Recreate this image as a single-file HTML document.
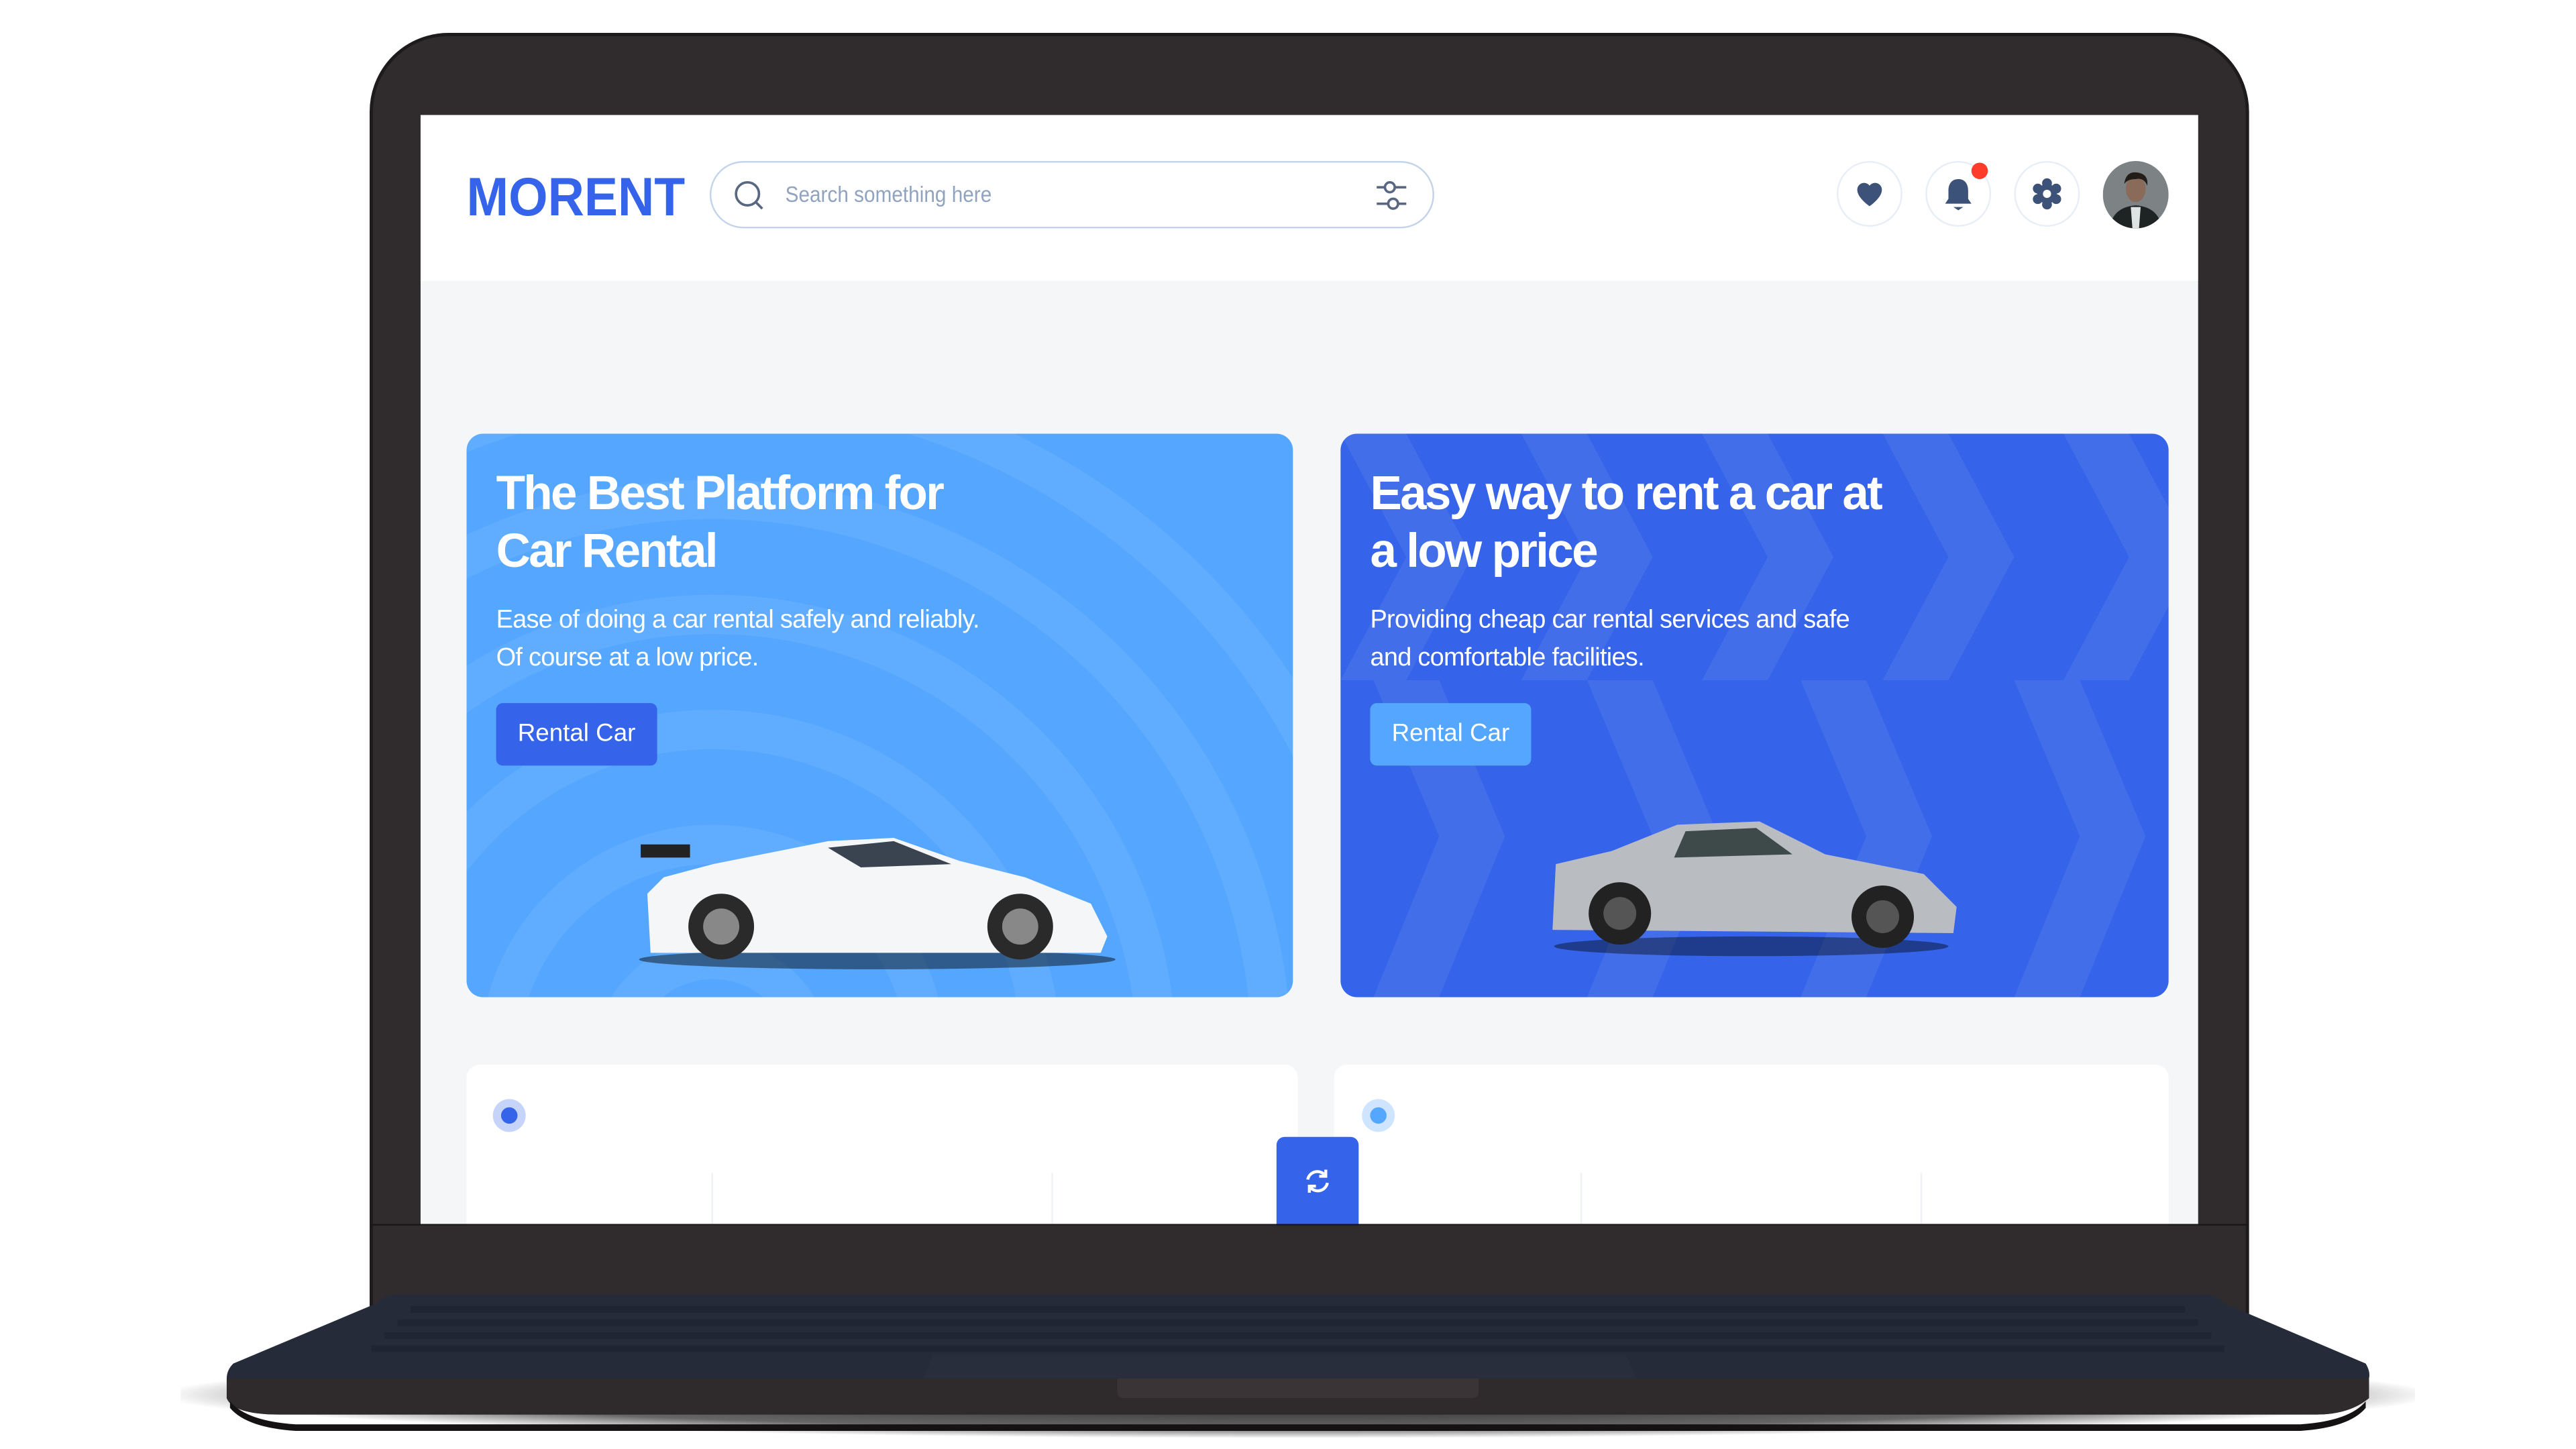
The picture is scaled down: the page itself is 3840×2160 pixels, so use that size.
<!DOCTYPE html>
<html><head><meta charset="utf-8"><style>
*{margin:0;padding:0;box-sizing:border-box}
html,body{width:3840px;height:2160px;background:#fff;overflow:hidden}
#w{position:absolute;left:0;top:0;width:1568px;height:882px;transform:scale(2.44898);transform-origin:0 0;font-family:"Liberation Sans",sans-serif;overflow:hidden}
.a{position:absolute}
</style></head><body><div id="w">
<div class="a" style="left:110px;top:835px;width:1360px;height:40px;background:radial-gradient(ellipse at 50% 35%,rgba(0,0,0,.9) 0%,rgba(0,0,0,.6) 55%,rgba(0,0,0,0) 72%)"></div>
<div class="a" style="left:225px;top:20px;width:1144px;height:790px;background:#302c2d;border-radius:48px 48px 10px 10px;border:2px solid #1e1b1c"></div>
<div class="a" style="left:256px;top:70px;width:1082px;height:676px;background:#f5f6f8;overflow:hidden">
  <div class="a" style="left:0;top:0;width:100%;height:101px;background:#fff"></div>
  <div class="a" style="left:28px;top:31px;font-size:33px;font-weight:bold;color:#3563e9;transform:scaleX(.93);transform-origin:0 0">MORENT</div>
  <div class="a" style="left:176px;top:28px;width:441px;height:41px;border:1.5px solid #c3d4e9;border-radius:21px;background:#fff"></div>
  <svg class="a" style="left:190px;top:39px" width="20" height="20" viewBox="0 0 20 20"><circle cx="9" cy="9" r="7" fill="none" stroke="#596780" stroke-width="1.5"/><path d="M14 14l4 4" stroke="#596780" stroke-width="1.5"/></svg>
  <div class="a" style="left:222px;top:41px;font-size:13.5px;color:#90a3bf;transform:scaleX(.9);transform-origin:0 0">Search something here</div>
  <svg class="a" style="left:580px;top:38px" width="22" height="22" viewBox="0 0 22 22" fill="none" stroke="#596780" stroke-width="1.5"><path d="M2 6h5M13 6h7M2 16h7M15 16h5"/><circle cx="10" cy="6" r="3"/><circle cx="12" cy="16" r="3"/></svg>
  <div class="a" style="left:862px;top:28px;width:40px;height:40px;border:1px solid #e8eef7;border-radius:50%"></div>
  <svg class="a" style="left:872px;top:38px" width="20" height="20" viewBox="0 0 24 24"><path d="M12 21s-9-6-9-12a5 5 0 0 1 9-3 5 5 0 0 1 9 3c0 6-9 12-9 12z" fill="#3d5278"/></svg>
  <div class="a" style="left:916px;top:28px;width:40px;height:40px;border:1px solid #e8eef7;border-radius:50%"></div>
  <svg class="a" style="left:926px;top:37px" width="20" height="22" viewBox="0 0 20 22"><path d="M10 2c-4 0-6 3-6 7v5l-2 3h16l-2-3V9c0-4-2-7-6-7z" fill="#3d5278"/><path d="M7 19h6l-3 2z" fill="#3d5278"/></svg>
  <div class="a" style="left:944px;top:29px;width:10px;height:10px;border-radius:50%;background:#ff3b2a"></div>
  <div class="a" style="left:970px;top:28px;width:40px;height:40px;border:1px solid #e8eef7;border-radius:50%"></div>
  <svg class="a" style="left:980px;top:38px" width="20" height="20" viewBox="0 0 20 20"><g fill="#3d5278"><circle cx="10" cy="10" r="6"/><circle cx="10" cy="3.5" r="3"/><circle cx="10" cy="16.5" r="3"/><circle cx="4.4" cy="6.8" r="3"/><circle cx="15.6" cy="6.8" r="3"/><circle cx="4.4" cy="13.2" r="3"/><circle cx="15.6" cy="13.2" r="3"/></g><circle cx="10" cy="10" r="2.5" fill="#fff"/></svg>
  <svg class="a" style="left:1024px;top:28px" width="40" height="41" viewBox="0 0 40 41"><defs><clipPath id="c"><ellipse cx="20" cy="20.5" rx="20" ry="20.5"/></clipPath></defs><g clip-path="url(#c)"><rect width="40" height="41" fill="#7d8285"/><path d="M4 41 Q6 28 20 27 Q34 28 36 41Z" fill="#1e2424"/><path d="M17 28h6l-1 13h-4z" fill="#dfe2e2"/><ellipse cx="20" cy="17" rx="6" ry="8" fill="#8a6a58"/><path d="M13 14 Q14 6 21 7 Q28 8 27 15 Q25 10 20 11 Q15 11 13 14Z" fill="#241c18"/></g></svg>
  <div class="a" style="left:28px;top:194px;width:503px;height:343px;border-radius:10px;background:#54a6ff;overflow:hidden">
    <svg class="a" style="left:0;top:0" width="503" height="343"><g fill="none" stroke="rgba(255,255,255,.07)" stroke-width="24"><circle cx="150" cy="380" r="60"/><circle cx="150" cy="380" r="130"/><circle cx="150" cy="380" r="200"/><circle cx="150" cy="380" r="270"/><circle cx="150" cy="380" r="340"/><circle cx="150" cy="380" r="410"/></g></svg>
    <div class="a" style="left:18px;top:20px;font-size:29px;font-weight:bold;color:#fff;line-height:35px;letter-spacing:-1.1px">The Best Platform for<br>Car Rental</div>
    <div class="a" style="left:18px;top:102px;font-size:15.5px;color:#fff;line-height:23px;letter-spacing:-0.3px">Ease of doing a car rental safely and reliably.<br>Of course at a low price.</div>
    <div class="a" style="left:18px;top:164px;width:98px;height:38px;background:#3563e9;border-radius:4px;color:#fff;font-size:15px;line-height:38px;text-align:center">Rental Car</div>
    <svg class="a" style="left:100px;top:240px" width="300" height="90" viewBox="0 0 300 90"><ellipse cx="150" cy="80" rx="145" ry="6" fill="rgba(0,0,0,.45)"/><path d="M12 76 L10 40 L20 30 L50 22 L120 8 L160 6 L200 20 L240 30 L280 46 L290 66 L286 76 Z" fill="#f4f6f8"/><path d="M6 10h30v8H6z" fill="#222"/><path d="M120 12 L160 8 L195 22 L140 24Z" fill="#3a4350"/><circle cx="55" cy="60" r="20" fill="#2a2a2a"/><circle cx="55" cy="60" r="11" fill="#888"/><circle cx="237" cy="60" r="20" fill="#2a2a2a"/><circle cx="237" cy="60" r="11" fill="#888"/></svg>
  </div>
  <div class="a" style="left:560px;top:194px;width:504px;height:343px;border-radius:10px;background:#3563e9;overflow:hidden">
    <svg class="a" style="left:0;top:0" width="504" height="343"><g fill="rgba(255,255,255,.07)"><path d="M0 0h40l40 75-40 75H0l40-75z"/><path d="M110 0h40l40 75-40 75h-40l40-75z"/><path d="M220 0h40l40 75-40 75h-40l40-75z"/><path d="M330 0h40l40 75-40 75h-40l40-75z"/><path d="M440 0h40l40 75-40 75h-40l40-75z"/><path d="M20 150h40l40 95-40 98H20l40-98z"/><path d="M150 150h40l40 95-40 98h-40l40-98z"/><path d="M280 150h40l40 95-40 98h-40l40-98z"/><path d="M410 150h40l40 95-40 98h-40l40-98z"/></g></svg>
    <div class="a" style="left:18px;top:20px;font-size:29px;font-weight:bold;color:#fff;line-height:35px;letter-spacing:-1.1px">Easy way to rent a car at<br>a low price</div>
    <div class="a" style="left:18px;top:102px;font-size:15.5px;color:#fff;line-height:23px;letter-spacing:-0.3px">Providing cheap car rental services and safe<br>and comfortable facilities.</div>
    <div class="a" style="left:18px;top:164px;width:98px;height:38px;background:#54a6ff;border-radius:4px;color:#fff;font-size:15px;line-height:38px;text-align:center">Rental Car</div>
    <svg class="a" style="left:125px;top:232px" width="255" height="90" viewBox="0 0 255 90"><ellipse cx="125" cy="80" rx="120" ry="6" fill="rgba(0,0,0,.4)"/><path d="M4 70 L6 30 L40 22 L80 6 L130 4 L170 24 L230 36 L250 56 L248 72 Z" fill="#b9bcc1"/><path d="M85 10 L128 8 L150 24 L78 26Z" fill="#3e4a4a"/><circle cx="45" cy="60" r="19" fill="#222"/><circle cx="45" cy="60" r="10" fill="#555"/><circle cx="205" cy="62" r="19" fill="#222"/><circle cx="205" cy="62" r="10" fill="#555"/></svg>
  </div>
  <div class="a" style="left:28px;top:578px;width:506px;height:120px;background:#fff;border-radius:8px"></div>
  <div class="a" style="left:556px;top:578px;width:508px;height:120px;background:#fff;border-radius:8px"></div>
  <div class="a" style="left:177px;top:644px;width:1px;height:40px;background:#eef1f5"></div>
  <div class="a" style="left:384px;top:644px;width:1px;height:40px;background:#eef1f5"></div>
  <div class="a" style="left:706px;top:644px;width:1px;height:40px;background:#eef1f5"></div>
  <div class="a" style="left:913px;top:644px;width:1px;height:40px;background:#eef1f5"></div>
  <div class="a" style="left:44px;top:599px;width:20px;height:20px;border-radius:50%;background:#c6d4fa"></div>
  <div class="a" style="left:49px;top:604px;width:10px;height:10px;border-radius:50%;background:#3563e9"></div>
  <div class="a" style="left:573px;top:599px;width:20px;height:20px;border-radius:50%;background:#cfe4ff"></div>
  <div class="a" style="left:578px;top:604px;width:10px;height:10px;border-radius:50%;background:#54a6ff"></div>
  <div class="a" style="left:521px;top:622px;width:50px;height:60px;background:#3563e9;border-radius:5px"></div>
  <svg class="a" style="left:537px;top:640px" width="18" height="18" viewBox="0 0 18 18" fill="none" stroke="#fff" stroke-width="1.8"><path d="M3 8a6 6 0 0 1 11-2M15 10a6 6 0 0 1-11 2"/><path d="M14 2v4h-4M4 16v-4h4"/></svg>
</div>
<div class="a" style="left:226px;top:745px;width:1142px;height:1px;background:#1a1718"></div>
<svg class="a" style="left:130px;top:785px" width="1322" height="90" viewBox="0 0 1322 90">
  <path d="M100 8 Q103 3 112 3 L1212 3 Q1220 3 1223 8 L1310 45 Q1313 50 1312 54 L1312 66 Q1300 76 1280 76 L40 76 Q12 76 8 66 L8 54 Q8 49 12 45 Z" fill="#252b38"/>
  <path d="M8 54 L1312 54 L1312 66 Q1300 76 1280 76 L40 76 Q12 76 8 66Z" fill="#2f2a2b"/>
  <path d="M10 68 Q20 80 50 82 L1270 82 Q1300 80 1310 68 L1310 72 Q1300 84 1270 86 L50 86 Q20 84 10 72Z" fill="#141212"/>
  <path d="M550 54 h220 v8 q0 4 -4 4 h-212 q-4 0 -4 -4z" fill="#3a3436"/>
  <g fill="#1f2532"><rect x="120" y="10" width="1080" height="4"/><rect x="112" y="18" width="1096" height="4"/><rect x="104" y="26" width="1112" height="4"/><rect x="96" y="34" width="1128" height="4"/></g>
  <path d="M438 40 L860 40 L866 54 L432 54Z" fill="#282e3c"/>
</svg>
</div></body></html>
